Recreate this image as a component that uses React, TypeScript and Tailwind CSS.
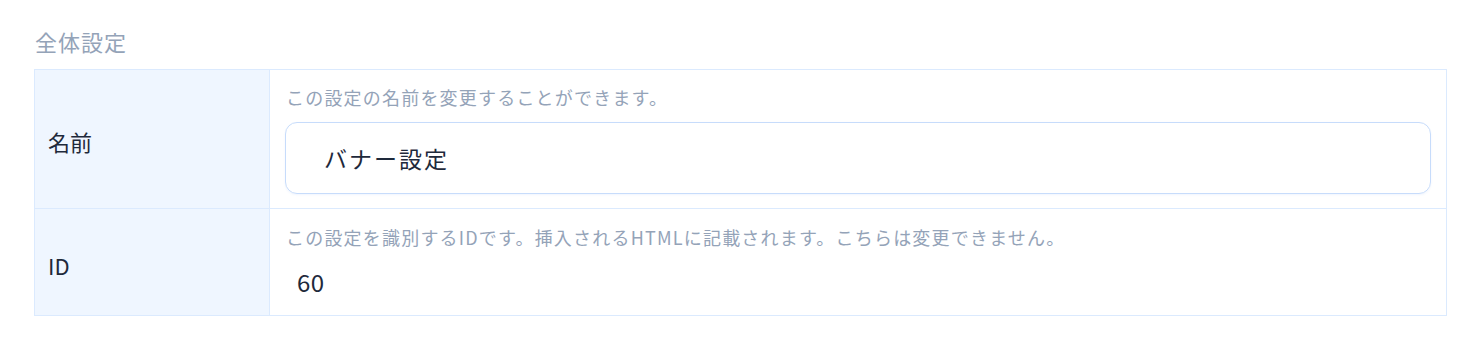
const font = "font-['Noto_Sans_CJK_JP','Noto_Sans',sans-serif]";

export default function App() {
  return (
    <div className={`${font} bg-white w-[1482px] h-[346px] pt-[25px] pl-[34px] pr-[35px]`}>
      <h3 className="text-[22px] leading-[32px] tracking-[1px] text-[#94a3b8] pl-px mb-[12px]">全体設定</h3>
      <div className="border border-[#dbeafe]">
        {/* 名前 */}
        <div className="flex border-b border-[#dbeafe]">
          <div className="w-[235px] shrink-0 bg-[#eff6ff] border-r border-[#dbeafe] flex items-center pl-[13px] pt-[5px] text-[22px] text-[#1e293b]">
            名前
          </div>
          <div className="flex-1 pl-[15px] pr-[15px] pt-[14px] pb-[14px]">
            <p className="text-[18px] leading-[27px] tracking-[1.2px] text-[#94a3b8] pl-px">
              この設定の名前を変更することができます。
            </p>
            <div className="mt-[11px] h-[72px] rounded-[12px] border border-[#c7dcfb] shadow-[0_1px_2px_rgba(59,130,246,0.08)] flex items-center pl-[38px] text-[23px] tracking-[2px] text-[#1e293b]">
              バナー設定
            </div>
          </div>
        </div>
        {/* ID */}
        <div className="flex">
          <div className="w-[235px] shrink-0 bg-[#eff6ff] border-r border-[#dbeafe] flex items-center pl-[13px] pt-[6px] text-[22px] text-[#1e293b]">
            ID
          </div>
          <div className="flex-1 pl-[15px] pr-[15px] pt-[15px] pb-[15px]">
            <p className="text-[18px] leading-[27px] tracking-[1.2px] text-[#94a3b8] pl-px">
              この設定を識別するIDです。挿入されるHTMLに記載されます。こちらは変更できません。
            </p>
            <div className="mt-[13px] pl-[12px] text-[24px] leading-[36px] tracking-[0.5px] text-[#1e293b]">60</div>
          </div>
        </div>
      </div>
    </div>
  );
}
